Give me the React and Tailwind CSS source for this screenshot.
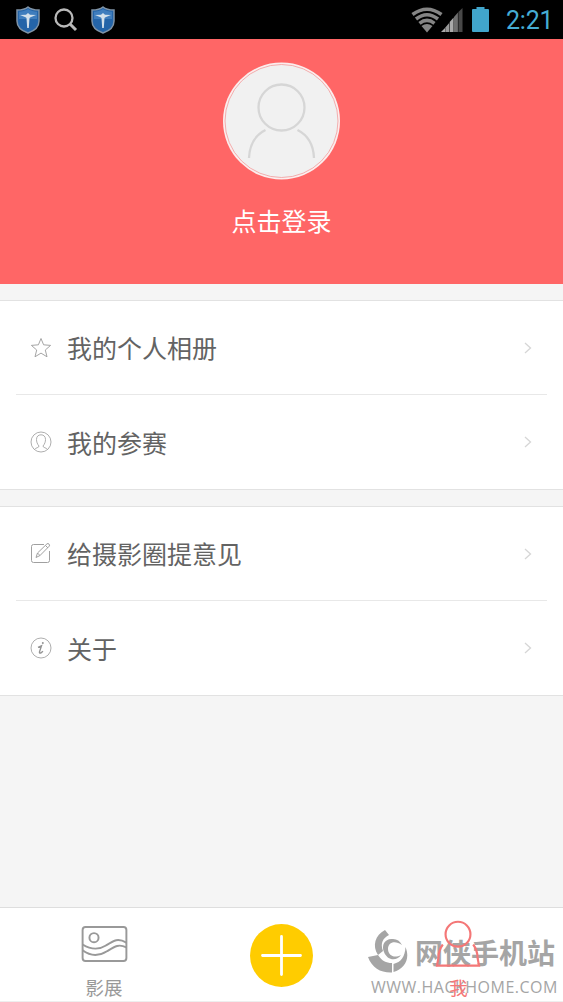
import React from "react";

const ShieldIcon = () => (
  <svg className="h-[28px] w-[24px]" viewBox="0 0 24 28" fill="none">
    <path d="M12 1C9 3.500 5 4 1 4v11c0 6 5 10 11 12 6-2 11-6 11-12V4c-4 0-8-.5-11-3z" fill="#2464a8" stroke="#7f93a6" strokeWidth="1.500" />
    <path d="M12 3c3 2 6 2.700 9 2.800V13H3V5.800C6 5.700 9 5 12 3z" fill="#3f7dbd" />
    <path d="M4 9l6-.3 2-1.700 2 1.700 6 .3-5.500 2.200-1 .8L12.800 22h-1.600l-.7-10-1-.8z" fill="#d3e0ea" />
  </svg>
);

const SearchIcon = () => (
  <svg className="h-[24px] w-[24px]" viewBox="0 0 24 24" fill="none" stroke="#b9b9b9" strokeWidth="2.300">
    <circle cx="10" cy="10" r="8.500" />
    <path d="M16 16l6 6" strokeWidth="3" />
  </svg>
);

const WifiIcon = () => (
  <svg className="h-[26px] w-[32px]" viewBox="0 0 32 26" fill="none" stroke="#858585" strokeWidth="3.600">
    <path d="M1.500 7.500Q16-3 30.500 7.500" />
    <path d="M5 12Q16 3.500 27 12" />
    <path d="M8.500 16.300Q16 10.500 23.500 16.300" />
    <path d="M10.500 19q5.500-4 11 0L16 25.500z" fill="#858585" stroke="none" />
  </svg>
);

const SignalIcon = () => (
  <svg className="h-[24px] w-[22px]" viewBox="0 0 22 24">
    <path d="M0 24l4-4v4z" fill="#aaa" />
    <path d="M4.300 24v-4.500l3.900-4.500v9z" fill="#999" />
    <path d="M8.700 24V14l3.900-4.500V24z" fill="#aaa" />
    <path d="M13 24V9l3.900-4.500V24z" fill="#707070" />
    <path d="M17.400 24V4L21.500 0v24z" fill="#484848" />
  </svg>
);

const BatteryIcon = () => (
  <svg className="h-[25px] w-[17px]" viewBox="0 0 17 25" fill="#41a5cb">
    <path d="M4.500 0h8v2H16q1 0 1 1v21q0 1-1 1H1q-1 0-1-1V3q0-1 1-1h3.500z" />
  </svg>
);

const StatusBar = () => (
  <div className="flex h-[39px] items-center bg-black pl-4">
    <ShieldIcon />
    <div className="ml-[14px]">
      <SearchIcon />
    </div>
    <div className="ml-[13px]">
      <ShieldIcon />
    </div>
    <div className="ml-auto flex items-center pr-[11px]">
      <WifiIcon />
      <div className="-ml-[2px]">
        <SignalIcon />
      </div>
      <div className="mr-[17px] ml-[9px]">
        <BatteryIcon />
      </div>
      <span className="w-[46px] whitespace-nowrap pt-px font-['Roboto',sans-serif] text-[25px] leading-none tracking-[-0.2px] text-[#45add4]">2:21</span>
    </div>
  </div>
);

const ProfileHeader = () => (
  <div className="flex h-[245px] flex-col items-center bg-[#ff6666] pt-[23px]">
    <svg className="mr-px h-[118px] w-[119px]" viewBox="0 0 119 118" fill="none">
      <circle cx="59.500" cy="59" r="58.500" fill="#fbeeee" />
      <circle cx="59.500" cy="59" r="56.500" fill="#f1f1f1" stroke="#f39c9c" strokeWidth="0.800" />
      <g stroke="#d6d6d6" strokeWidth="2.300">
        <circle cx="59.500" cy="45.500" r="23" />
        <path d="M43.500 68C32.500 73.500 27.500 84 27 96" />
        <path d="M75.500 68C86.500 73.500 91.500 84 92 96" />
      </g>
    </svg>
    <div className="mt-[22px] text-[25px] leading-[36px] text-white">点击登录</div>
  </div>
);

const StarIcon = () => (
  <svg className="h-[22px] w-[22px]" viewBox="0 0 22 22" fill="none" stroke="#a5a5a5" strokeWidth="1">
    <path d="M11 1.500l2.600 6.300 7 .6-5.300 4.600 1.700 6.800-6-3.700-6 3.700L6.700 13 1.400 8.400l7-.6z" />
  </svg>
);

const ContestIcon = () => (
  <svg className="h-[22px] w-[22px]" viewBox="0 0 22 22" fill="none" stroke="#a5a5a5" strokeWidth="0.900">
    <circle cx="11" cy="11" r="10" />
    <path d="M4.500 18.500c1-2 4.500-1.500 4.500-3.500C7.200 13 6.500 10.500 6.500 8.500c0-3 1.800-4.700 4.500-4.700s4.500 1.700 4.500 4.700c0 2-.7 4.500-2.500 6.500 0 2 3.500 1.500 4.500 3.500" />
  </svg>
);

const FeedbackIcon = () => (
  <svg className="h-[22px] w-[22px]" viewBox="0 0 22 22" fill="none" stroke="#a0a0a0" strokeWidth="1">
    <path d="M14 1.500H3.500Q1.500 1.500 1.500 3.500v14q0 2 2 2h14q2 0 2-2V8" />
    <path d="M6 14.500l1.500-4.500L17 .8q1-.7 2 .3t.3 2L10 12.500zM7.500 10l2.500 2.500M15.500 2.500L18 5" />
  </svg>
);

const InfoIcon = () => (
  <svg className="h-[22px] w-[22px]" viewBox="0 0 22 22" fill="none" stroke="#a5a5a5" strokeWidth="0.900">
    <circle cx="11" cy="11" r="10" />
    <path d="M8 10.300l3.500-1.500-2 6q-.3 1.700 1.200 1.200l2.300-1.700" stroke="#949494" strokeWidth="1.400" />
    <circle cx="12.800" cy="6" r="1" fill="#949494" stroke="none" />
  </svg>
);

const MenuItem = ({ icon: Icon, label }) => (
  <div className="flex h-[93px] items-center pr-[31px] pl-[30px] last:h-[94px]">
    <Icon />
    <span className="ml-[15px] flex-1 pb-px text-[25px] leading-[36px] text-[#636363]">{label}</span>
    <svg className="h-[12px] w-[8px]" viewBox="0 0 8 12" fill="none" stroke="#d6d6d6" strokeWidth="1.300">
      <path d="M1 1l5.500 5L1 11" />
    </svg>
  </div>
);

const MenuGroup = ({ items }) => (
  <div className="mt-4 border-y border-[#e2e2e2] bg-white">
    {items.map((item, index) => (
      <React.Fragment key={item.label}>
        {index > 0 && <div className="mx-4 h-px bg-[#e8e8e8]" />}
        <MenuItem {...item} />
      </React.Fragment>
    ))}
  </div>
);

const Watermark = () => (
  <div className="absolute top-[21px] left-[367px] w-[192px] text-[#a5a5a5]">
    <div className="flex h-[46px] items-center">
      <svg className="h-[46px] w-[42px] shrink-0" viewBox="0 0 42 46" fill="currentColor">
        <path d="M18 1C8 6 5 17 11 26l5-4C13 14 16 9 22 6z" />
        <path d="M1 28l10-2c4 6 8 8 14 8v9.500C14 44 5 39 1 28z" />
        <path d="M26.500 43v-8C34 33 38 28 38.500 18c5 12-1 22-12 25z" />
        <path d="M17 23c-3-7 1-14 9-13 4 0 7 2 9 6-7-5-14-3-14 4 0 6 6 10 13 6-5 7-14 5-17-3z" />
      </svg>
      <span className="ml-[6px] whitespace-nowrap pt-px text-[28px] leading-[45px] font-bold">网侠手机站</span>
    </div>
    <div className="ml-[4px] whitespace-nowrap pt-px font-['Open_Sans',sans-serif] text-[16px] leading-[22px] font-medium tracking-[0.500px]">WWW.HACKHOME.COM</div>
  </div>
);

const BottomNav = () => (
  <div className="relative flex h-[95px] border-y border-[#dedede] border-b-[#eeeeee] bg-white">
    <Watermark />
    <div className="flex w-[208px] flex-col items-center pt-[18px] text-[#999]">
      <svg className="h-[37px] w-[47px]" viewBox="0 0 47 37" fill="none" stroke="currentColor" strokeWidth="2">
        <rect x="1" y="1" width="45" height="35" rx="3" />
        <circle cx="12.700" cy="12" r="4.700" />
        <path d="M1 19c8 5 16 6 24 1s12-8 21-3" />
        <path d="M1 25c8 6 17 6 25 1s12-8 20-4" />
      </svg>
      <span className="mt-[11px] text-[18.500px] leading-[28px]">影展</span>
    </div>
    <div className="flex w-[147px] justify-center pt-[16px]">
      <svg className="h-[63px] w-[63px]" viewBox="0 0 63 63">
        <circle cx="31.500" cy="31.500" r="31.500" fill="#ffcc00" />
        <path d="M31.500 12.500v38M12.500 31.500h38" stroke="#fff" strokeWidth="2.800" strokeLinecap="round" />
      </svg>
    </div>
    <div className="relative flex w-[208px] flex-col items-center pt-[12px] text-[#f47777]">
      <svg className="ml-[-2px] h-[49px] w-[48px]" viewBox="0 0 48 49" fill="none" stroke="currentColor" strokeWidth="2.200">
        <circle cx="24" cy="14.500" r="12.700" />
        <path d="M8.500 25Q4 31 4 39L2.500 46.500h43L44 39Q44 31 39.500 25" />
      </svg>
      <span className="mt-[5px] ml-[-1px] text-[18.500px] leading-[28px]">我</span>
    </div>
  </div>
);

const App = () => {
  const albumItems = [
    { icon: StarIcon, label: "我的个人相册" },
    { icon: ContestIcon, label: "我的参赛" },
  ];
  const aboutItems = [
    { icon: FeedbackIcon, label: "给摄影圈提意见" },
    { icon: InfoIcon, label: "关于" },
  ];

  return (
    <div className="flex h-[1002px] w-[563px] flex-col overflow-hidden bg-[#f5f5f5] font-['Noto_Sans_CJK_SC',sans-serif]">
      <StatusBar />
      <ProfileHeader />
      <MenuGroup items={albumItems} />
      <MenuGroup items={aboutItems} />
      <div className="flex-1" />
      <BottomNav />
    </div>
  );
};

export default App;
